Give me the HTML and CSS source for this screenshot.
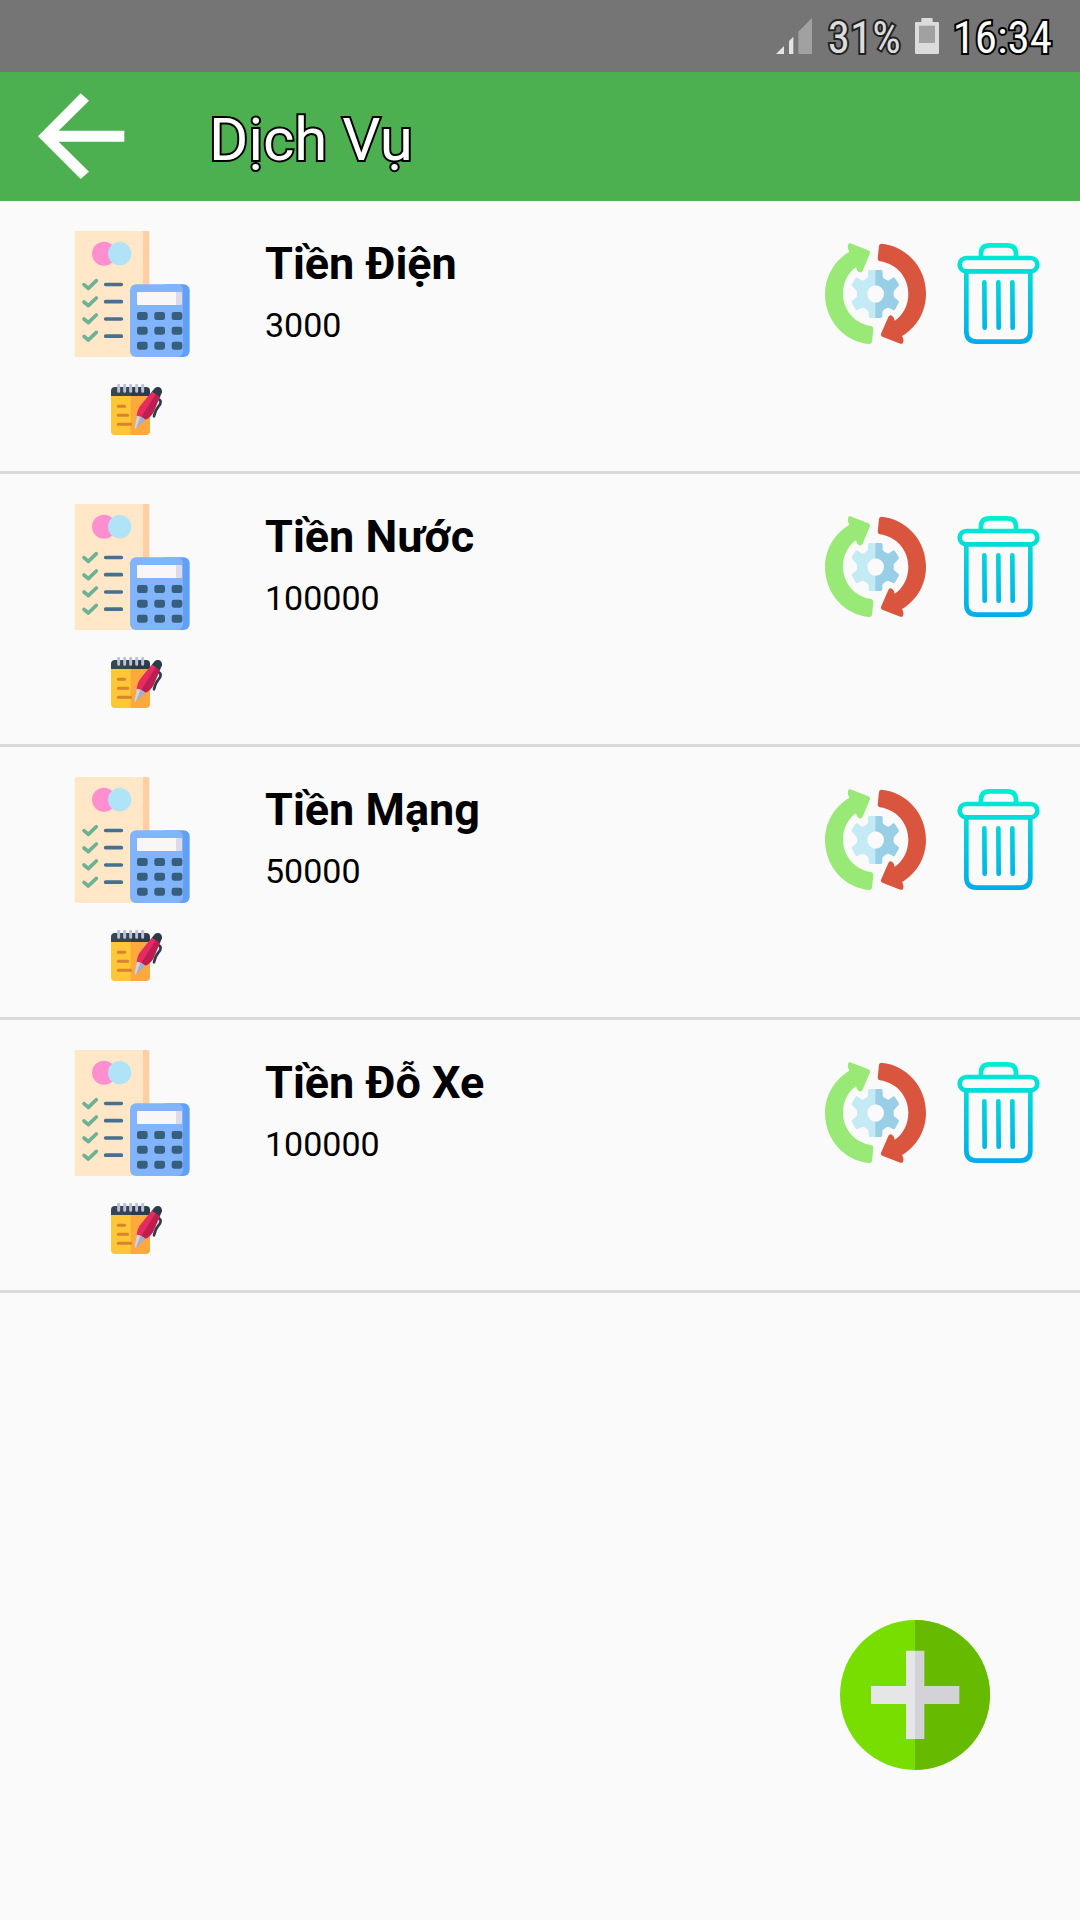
FILE: index.html
```html
<!DOCTYPE html>
<html lang="vi">
<head>
<meta charset="utf-8">
<meta name="viewport" content="width=device-width, initial-scale=1">
<title>Dịch Vụ</title>
<link rel="stylesheet" href="styles.css">
</head>
<body>
<svg class="sprite" aria-hidden="true">
  <defs>
    <linearGradient id="trash-fill" gradientUnits="userSpaceOnUse" x1="0" y1="39" x2="0" y2="342">
      <stop offset="0" stop-color="#00efd1"/>
      <stop offset="1" stop-color="#00acea"/>
    </linearGradient>
    <symbol id="icon-service" viewBox="27 48 378 378">
      <path fill="#ffcea2" d="M230 48h34q4 0 4 4v200h-38z"/>
      <path fill="#ffe7c8" d="M48 48h201v378H48q-4 0-4-4V52q0-4 4-4z"/>
      <circle cx="132" cy="116" r="36" fill="#ff8fcf"/>
      <circle cx="179" cy="116" r="35" fill="#b0e3f8"/>
      <path fill="none" stroke="#6fb194" stroke-width="11" stroke-linecap="round" stroke-linejoin="round" d="M72 209l13 11 24-23M72 261l13 11 24-23M72 312l13 11 24-23M72 364l13 11 24-23"/>
      <path fill="none" stroke="#46708f" stroke-width="11" stroke-linecap="round" d="M137 208.500h47M137 260h47M137 312h47M137 363.500h47"/>
      <rect x="300" y="208" width="89" height="218" rx="18" fill="#61a0f5"/>
      <rect x="210" y="208" width="159" height="218" rx="18" fill="#82b4fb"/>
      <rect x="231" y="231" width="135" height="39" rx="4" fill="#dedaea"/>
      <path fill="#f9f6f8" d="M235 231h113v39H235q-4 0-4-4v-31q0-4 4-4z"/>
      <g fill="#365e7d">
        <rect x="231" y="291" width="32" height="24" rx="7"/><rect x="283" y="291" width="32" height="24" rx="7"/><rect x="335" y="291" width="32" height="24" rx="7"/>
        <rect x="231" y="335" width="32" height="24" rx="7"/><rect x="283" y="335" width="32" height="24" rx="7"/><rect x="335" y="335" width="32" height="24" rx="7"/>
        <rect x="231" y="380" width="32" height="24" rx="7"/><rect x="283" y="380" width="32" height="24" rx="7"/><rect x="335" y="380" width="32" height="24" rx="7"/>
      </g>
    </symbol>
    <symbol id="icon-note" viewBox="63 42 153 153">
      <path fill="#ffc736" d="M63 77h60v118H75q-12 0-12-12z"/>
      <path fill="#ffa83b" d="M122 77h58v106q0 12-12 12h-46z"/>
      <path fill="#37474f" d="M63 78V63q0-12 12-12h48v27z"/>
      <path fill="#293c48" d="M122 51h46q12 0 12 12v15h-58z"/>
      <path fill="none" stroke="#bcc0db" stroke-width="9" stroke-linecap="round" d="M86 46v18M104 46v18M122 46v18M140 46v18M158 46v18"/>
      <path fill="none" stroke="#d9822f" stroke-width="9" stroke-linecap="round" d="M85 109h19M85 136h28M85 163h37"/>
      <path fill="none" stroke="#2b3e4a" stroke-width="8" stroke-linecap="round" stroke-linejoin="round" d="M202 86q10 3 10 10 0 6-7 14-9 10-13 29"/>
      <path fill="#293c48" d="M185 66l9-11q6-6 15-3 8 5 7 15l-7 16z"/>
      <path fill="#e52b60" d="M185 65l13 8-44 70-14-4q2-22 13-34z"/>
      <path fill="#bd1e51" d="M197 72l13 9-18 43q-8 18-25 25l-14-7z"/>
      <path fill="#cfd3e6" d="M141 137l12 3-15 37q-3-2-4-6z"/>
      <path fill="#a9adc6" d="M152 139l15 10-29 27z"/>
    </symbol>
    <symbol id="icon-refresh" viewBox="45 39 303 303">
      <path fill="#98e976" d="M119 39l56 22q7 3 5 9l-22 52q-4 8-12 4-6-3-8-14c-25 17-39 48-39 78 0 51 36 92 84 98q7 1 7 9l-4 39q-1 6-8 6C104 336 45 272 45 192c0-53 28-100 73-127q-7-11-4-20 1-5 5-6z"/>
      <path fill="#da553d" d="M215 41C290 49 348 112 348 191c0 54-28 101-72 127q7 10 3 20-2 5-8 3l-54-21q-6-3-4-9l21-48q4-10 12-6 7 4 8 15c26-17 41-48 41-81 0-50-36-90-85-97q-7-2-7-8l4-39q1-6 8-6z"/>
      <path fill="#c3eaf5" d="M196 120h-17q-5 0-5 5v14q0 4-5 7l-8 5q-4 2-8-1l-10-7q-4-3-7 2l-10 16q-2 5 1 8l10 10q4 3 4 8v10q0 4-4 7l-10 8q-4 3-1 7l10 18q3 5 7 3l12-6q4-2 8 1l8 5q5 3 5 7v12q0 5 5 5h17v-46a26 26 0 0 1 0-52z"/>
      <path fill="#98cee6" d="M196 120h17q5 0 5 5v14q0 4 5 7l8 5q4 2 8-1l9-7q4-3 7 2l11 16q2 5-1 8l-10 10q-4 3-4 8v10q0 4 4 7l10 8q4 3 1 7l-10 18q-3 5-7 3l-12-6q-4-2-8 1l-7 5q-5 3-5 7v12q0 5-5 5h-16v-46a26 26 0 0 0 0-52z"/>
    </symbol>
    <symbol id="icon-trash" viewBox="24 39 303 303">
      <g fill="none" stroke="url(#trash-fill)" stroke-width="14" stroke-linecap="round">
        <path d="M123 78v-7q0-25 25-25h54q26 0 26 25v7"/>
        <rect x="59" y="84" width="233" height="40" rx="20"/>
        <path d="M79 127v177q0 31 31 31h130q31 0 31-31V127"/>
        <path d="M133 157l1 136M175 157l1 136M217 157l1 136"/>
      </g>
    </symbol>
  </defs>
</svg>

<div class="status-bar">
  <svg class="signal" viewBox="57 51 108 108" aria-hidden="true">
    <path fill="#e3e3e3" d="M57 159l24-24v24zM96 120l13-13v52H96z"/>
    <path fill="#a1a1a1" d="M124 92l41-41v108h-41z"/>
  </svg>
  <span class="status-text charge">31%</span>
  <svg class="battery" viewBox="471 54 72 108" aria-hidden="true">
    <path fill="#dcdcdc" d="M493 54h28q3 0 3 3v9h15q4 0 4 4v88q0 4-4 4h-64q-4 0-4-4V70q0-4 4-4h15v-9q0-3 3-3z"/>
    <path fill="#a1a1a1" d="M483 77h48v52h-48z"/>
  </svg>
  <time class="status-text clock">16:34</time>
</div>

<header class="app-bar">
  <button class="icon-button" type="button" aria-label="Quay lại">
    <svg class="back" viewBox="114 100 261 261" aria-hidden="true"><path fill="#fff" d="M242 101l25 22-91 90h197v33H176l91 90-25 22L114 230z"/></svg>
  </button>
  <h1 class="page-title">Dịch Vụ</h1>
</header>

<main>
  <ul class="services">
    <li class="service">
      <div class="service-icons">
        <svg class="service-picture" aria-hidden="true"><use href="#icon-service"/></svg>
        <button class="icon-button edit-button" type="button" aria-label="Sửa Tiền Điện"><svg class="note" aria-hidden="true"><use href="#icon-note"/></svg></button>
      </div>
      <div class="service-text"><h2 class="service-name">Tiền Điện</h2><p class="service-price">3000</p></div>
      <div class="service-actions">
        <button class="icon-button" type="button" aria-label="Cập nhật Tiền Điện"><svg class="action" aria-hidden="true"><use href="#icon-refresh"/></svg></button>
        <button class="icon-button" type="button" aria-label="Xóa Tiền Điện"><svg class="action" aria-hidden="true"><use href="#icon-trash"/></svg></button>
      </div>
    </li>
    <li class="service">
      <div class="service-icons">
        <svg class="service-picture" aria-hidden="true"><use href="#icon-service"/></svg>
        <button class="icon-button edit-button" type="button" aria-label="Sửa Tiền Nước"><svg class="note" aria-hidden="true"><use href="#icon-note"/></svg></button>
      </div>
      <div class="service-text"><h2 class="service-name">Tiền Nước</h2><p class="service-price">100000</p></div>
      <div class="service-actions">
        <button class="icon-button" type="button" aria-label="Cập nhật Tiền Nước"><svg class="action" aria-hidden="true"><use href="#icon-refresh"/></svg></button>
        <button class="icon-button" type="button" aria-label="Xóa Tiền Nước"><svg class="action" aria-hidden="true"><use href="#icon-trash"/></svg></button>
      </div>
    </li>
    <li class="service">
      <div class="service-icons">
        <svg class="service-picture" aria-hidden="true"><use href="#icon-service"/></svg>
        <button class="icon-button edit-button" type="button" aria-label="Sửa Tiền Mạng"><svg class="note" aria-hidden="true"><use href="#icon-note"/></svg></button>
      </div>
      <div class="service-text"><h2 class="service-name">Tiền Mạng</h2><p class="service-price">50000</p></div>
      <div class="service-actions">
        <button class="icon-button" type="button" aria-label="Cập nhật Tiền Mạng"><svg class="action" aria-hidden="true"><use href="#icon-refresh"/></svg></button>
        <button class="icon-button" type="button" aria-label="Xóa Tiền Mạng"><svg class="action" aria-hidden="true"><use href="#icon-trash"/></svg></button>
      </div>
    </li>
    <li class="service">
      <div class="service-icons">
        <svg class="service-picture" aria-hidden="true"><use href="#icon-service"/></svg>
        <button class="icon-button edit-button" type="button" aria-label="Sửa Tiền Đỗ Xe"><svg class="note" aria-hidden="true"><use href="#icon-note"/></svg></button>
      </div>
      <div class="service-text"><h2 class="service-name">Tiền Đỗ Xe</h2><p class="service-price">100000</p></div>
      <div class="service-actions">
        <button class="icon-button" type="button" aria-label="Cập nhật Tiền Đỗ Xe"><svg class="action" aria-hidden="true"><use href="#icon-refresh"/></svg></button>
        <button class="icon-button" type="button" aria-label="Xóa Tiền Đỗ Xe"><svg class="action" aria-hidden="true"><use href="#icon-trash"/></svg></button>
      </div>
    </li>
  </ul>
</main>

<button class="icon-button add-button" type="button" aria-label="Thêm dịch vụ">
  <svg class="add" viewBox="60 60 450 450" aria-hidden="true">
    <circle cx="285" cy="285" r="225" fill="#78de00"/>
    <path fill="#66ba00" d="M285 60a225 225 0 0 1 0 450z"/>
    <path fill="#e6e6e6" d="M258 152h28v265h-28V312H153v-54h105z"/>
    <path fill="#d3d2d7" d="M285 152h28v106h105v54H313v105h-28z"/>
  </svg>
</button>
</body>
</html>
```
FILE: styles.css
```css
* {
  box-sizing: border-box;
}

body {
  margin: 0;
  min-height: 100vh;
  background: #fafafa;
  color: #000;
  font-family: Roboto, "Noto Sans", sans-serif;
}

h1,
h2,
p,
ul {
  margin: 0;
  padding: 0;
}

svg {
  display: block;
}

.sprite {
  position: absolute;
  width: 0;
  height: 0;
}

.icon-button {
  padding: 0;
  border: 0;
  background: none;
  cursor: pointer;
}

.status-bar {
  display: flex;
  align-items: center;
  justify-content: flex-end;
  height: 72px;
  padding-right: 28px;
  background: #757575;
}

.status-text {
  padding-top: 4px;
  font-family: "Roboto Condensed", Roboto, sans-serif;
  font-size: 45px;
  line-height: 54px;
  color: #fff;
  -webkit-text-stroke: 4px #000;
  paint-order: stroke fill;
}

.charge {
  color: #dcdcdc;
  -webkit-text-stroke-color: #222;
}

.signal {
  width: 36px;
  height: 36px;
  margin-right: 16px;
}

.battery {
  width: 24px;
  height: 36px;
  margin: 0 14px;
}

.app-bar {
  display: flex;
  align-items: center;
  gap: 84px;
  height: 129px;
  padding-left: 38px;
  background: #4caf50;
}

.back {
  width: 87px;
  height: 87px;
}

.page-title {
  padding-top: 6px;
  font-size: 60px;
  font-weight: 400;
  line-height: 72px;
  color: #fff;
  -webkit-text-stroke: 4px #000;
  paint-order: stroke fill;
}

.services {
  list-style: none;
}

.service {
  display: flex;
  align-items: flex-start;
  padding: 30px 31px 36px 0;
  border-bottom: 3px solid #dadada;
}

.service-icons {
  display: flex;
  flex-direction: column;
  align-items: flex-start;
  gap: 27px;
  width: 265px;
  padding-left: 69px;
}

.service-picture {
  width: 126px;
  height: 126px;
}

.edit-button {
  margin-left: 42px;
}

.note {
  width: 51px;
  height: 51px;
}

.service-text {
  flex: 1;
  padding-top: 6px;
}

.service-name {
  font-size: 45px;
  font-weight: 700;
  line-height: 54px;
}

.service-price {
  margin-top: 14px;
  font-size: 34px;
  line-height: 40px;
}

.service-actions {
  display: flex;
  gap: 22px;
  padding-top: 12px;
}

.action {
  width: 101px;
  height: 101px;
}

.add-button {
  position: fixed;
  right: 90px;
  bottom: 150px;
  border-radius: 50%;
}

.add {
  width: 150px;
  height: 150px;
}
```
